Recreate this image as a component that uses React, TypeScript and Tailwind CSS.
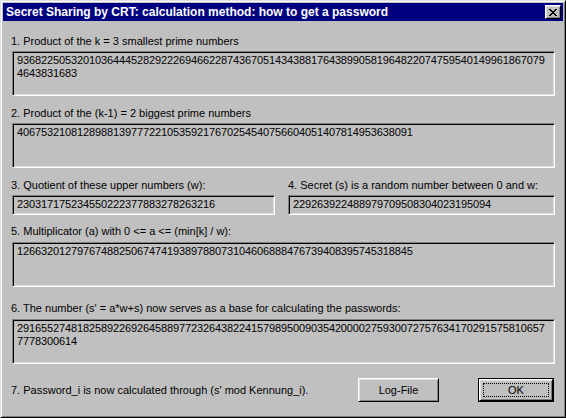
import React from 'react';

const raisedBox =
  'border border-t-white border-l-white border-r-black border-b-black shadow-[inset_1px_1px_0_#dfdfdf,inset_-1px_-1px_0_#808080]';
const sunkenBox =
  'border border-t-[#808080] border-l-[#808080] border-r-white border-b-white shadow-[inset_1px_1px_0_#000,inset_-1px_-1px_0_#dfdfdf]';

const Label: React.FC<{ children: React.ReactNode; className?: string }> = ({ children, className }) => (
  <div className={`h-[13px] leading-[13px] whitespace-nowrap ${className ?? ''}`}>{children}</div>
);

const NumberField: React.FC<{ lines: string[]; tall?: boolean; className?: string }> = ({ lines, tall, className }) => (
  <div
    className={`${sunkenBox} bg-[#c0c0c0] pl-[4px] pt-[2px] leading-[13px] tracking-[-0.12px] ${tall ? 'h-[45px]' : 'h-[20px]'} ${className ?? ''}`}
  >
    {lines.map((l) => (
      <div key={l} className="whitespace-nowrap">
        {l}
      </div>
    ))}
  </div>
);

const App: React.FC = () => {
  return (
    <div
      className="w-[566px] h-[418px] bg-[#c0c0c0] text-black text-[11px] border border-t-[#dfdfdf] border-l-[#dfdfdf] border-r-black border-b-black shadow-[inset_1px_1px_0_#fff,inset_-1px_-1px_0_#808080] p-[2px] flex flex-col"
      style={{ fontFamily: '"Liberation Sans", Arial, sans-serif' }}
    >
      {/* title bar */}
      <div className="h-[18px] bg-[#000080] flex items-center justify-between pl-[3px] pr-[2px]">
        <span className="text-white font-bold text-[12px] leading-[18px] whitespace-nowrap">
          Secret Sharing by CRT: calculation method: how to get a password
        </span>
        <button className={`${raisedBox} w-[16px] h-[14px] bg-[#c0c0c0] flex items-center justify-center`}>
          <svg width="8" height="7" viewBox="0 0 8 7" shapeRendering="crispEdges">
            <path
              d="M0 0h2v1h-2zM6 0h2v1h-2zM1 1h2v1h-2zM5 1h2v1h-2zM2 2h4v1h-4zM3 3h2v1h-2zM2 4h4v1h-4zM1 5h2v1h-2zM5 5h2v1h-2zM0 6h2v1h-2zM6 6h2v1h-2z"
              fill="#000"
            />
          </svg>
        </button>
      </div>

      <div className="flex flex-col px-[8px]">
        <Label className="mt-[14px]">1. Product of the k = 3 smallest prime numbers</Label>
        <NumberField
          tall
          className="mt-[3px] ml-[1px]"
          lines={['9368225053201036444528292226946622874367051434388176438990581964822074759540149961867079', '4643831683']}
        />

        <Label className="mt-[11px]">2. Product of the (k-1) = 2 biggest prime numbers</Label>
        <NumberField tall className="mt-[3px] ml-[1px]" lines={['406753210812898813977722105359217670254540756604051407814953638091']} />

        <div className="flex mt-[11px] gap-[13px]">
          <div className="flex flex-col w-[264px]">
            <Label>3. Quotient of these upper numbers (w):</Label>
            <NumberField className="mt-[3px] ml-[1px]" lines={['230317175234550222377883278263216']} />
          </div>
          <div className="flex flex-col flex-1">
            <Label>4. Secret (s) is a random number between 0 and w:</Label>
            <NumberField className="mt-[3px]" lines={['229263922488979709508304023195094']} />
          </div>
        </div>

        <Label className="mt-[10px]">5. Multiplicator (a) with 0 &lt;= a &lt;= (min[k] / w):</Label>
        <NumberField tall className="mt-[4px] ml-[1px]" lines={['126632012797674882506747419389788073104606888476739408395745318845']} />

        <Label className="mt-[15px]">6. The number (s' = a*w+s) now serves as a base for calculating the passwords:</Label>
        <NumberField
          tall
          className="mt-[4px] ml-[1px]"
          lines={['2916552748182589226926458897723264382241579895009035420000275930072757634170291575810657', '7778300614']}
        />

        <div className="flex items-center mt-[14px]">
          <span className="flex-1 whitespace-nowrap">7. Password_i is now calculated through (s' mod Kennung_i).</span>
          <button className={`${raisedBox} w-[81px] h-[24px] bg-[#c0c0c0] text-[11px] mr-[39px]`}>Log-File</button>
          <div className="border border-black mr-[1px]">
            <button className={`${raisedBox} w-[74px] h-[22px] bg-[#c0c0c0] text-[11px] p-[3px]`}>
              <div className="w-full h-full border border-dotted border-black flex items-center justify-center">OK</div>
            </button>
          </div>
        </div>
      </div>
    </div>
  );
};

export default App;
